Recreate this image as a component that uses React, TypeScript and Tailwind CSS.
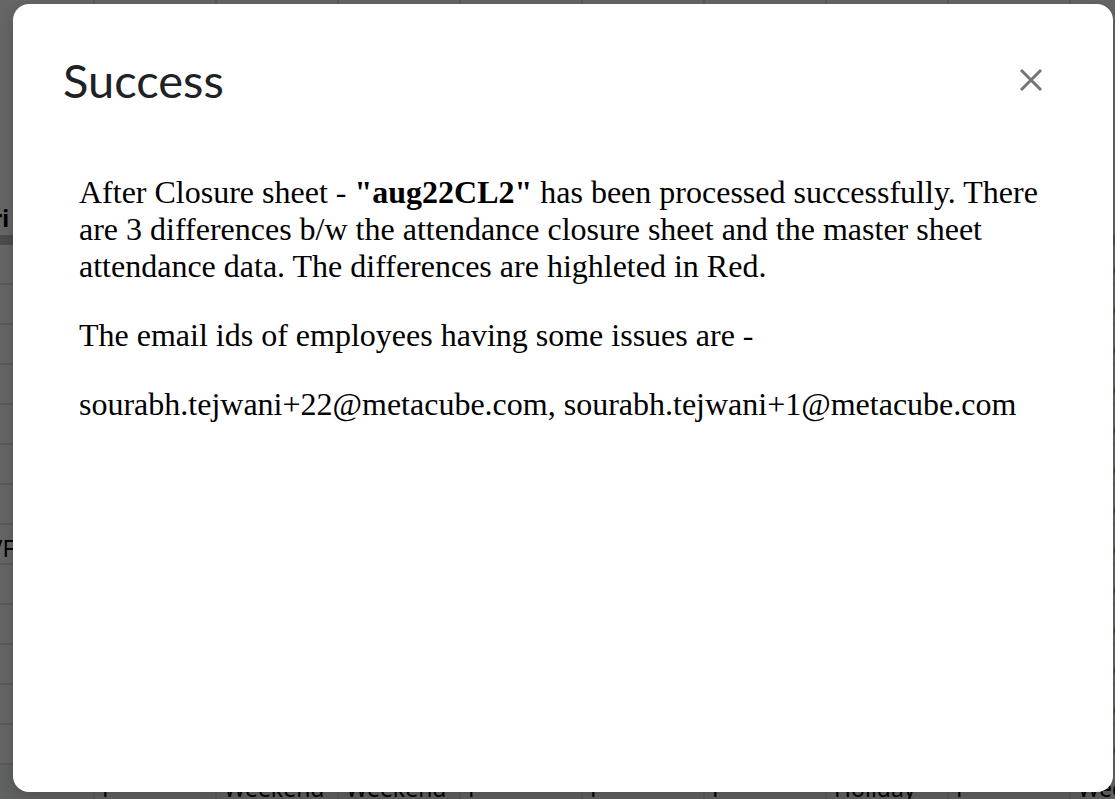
import { useState } from "react";

const rowNumbers = [1, 2, 3, 4, 5, 6, 7, 8, 9, 10, 11, 12, 13];
const lastRow = ["P", "Weekend", "Weekend", "P", "P", "P", "Holiday", "P", "Weekend"];
const cell = "border-r-2 border-b-2 border-[#e0e0e0] p-0 pt-2 whitespace-nowrap overflow-hidden";
const headCell = "border-r-2 border-b-10 border-r-[#e0e0e0] border-b-[#c0c0c0] p-0 pb-0.5 align-bottom font-bold";

function Sheet() {
  return (
    <div className="absolute inset-0 overflow-hidden bg-white" aria-hidden="true">
      <table className="w-[1193px] table-fixed border-separate border-spacing-0 text-left font-['Noto_Sans',sans-serif] text-[23px] leading-[30px] text-black">
        <colgroup>
          <col className="w-[95px]" />
          {lastRow.map((_, i) => (
            <col key={i} className="w-[122px]" />
          ))}
        </colgroup>
        <thead>
          <tr className="h-[245px]">
            <th className={headCell}>
              <span className="-ml-2 inline-block">ri</span>
            </th>
            {lastRow.map((_, i) => (
              <th key={i} className={headCell} />
            ))}
          </tr>
        </thead>
        <tbody>
          {rowNumbers.map((n) => (
            <tr key={n} className="h-10">
              <td className={cell}>{n === 8 && <span className="-ml-1.5 inline-block">/F</span>}</td>
              {lastRow.map((_, i) => (
                <td key={i} className={`${cell} pl-[42px] text-[#b45f06]`}>
                  {i === 8 ? "o" : ""}
                </td>
              ))}
            </tr>
          ))}
          <tr className="h-10 bg-[#f3f8f4]">
            <td className={cell} />
            {lastRow.map((text, i) => (
              <td key={i} className={`${cell} pl-[7px]`}>{text}</td>
            ))}
          </tr>
        </tbody>
      </table>
      <div className="absolute inset-0 bg-black/60" />
    </div>
  );
}

export default function App() {
  const [open, setOpen] = useState(true);
  return (
    <div className="relative flex h-screen overflow-hidden pt-1 pr-0.5 pb-[7px] pl-[13px]">
      <Sheet />
      {open && (
        <div
          role="dialog"
          aria-labelledby="dialog-title"
          className="relative flex-1 rounded-2xl bg-white shadow-[0_4px_16px_rgba(0,0,0,0.2)]"
        >
          <header className="flex items-center justify-between pt-12 pr-16 pl-[50px]">
            <h1 id="dialog-title" className="font-['Lato',sans-serif] text-[47px] leading-14 text-[#202124]">
              Success
            </h1>
            <button type="button" aria-label="Close" onClick={() => setOpen(false)} className="p-1">
              <svg viewBox="0 0 28 28" className="size-7" fill="none" stroke="#757575" strokeWidth="3">
                <path d="M4 4 24 24M24 4 4 24" />
              </svg>
            </button>
          </header>
          <div className="flex flex-col gap-8 pt-[66px] pr-[66px] pl-[66px] font-['Liberation_Serif',serif] text-[32px] leading-[37px] text-black">
            <p>
              After Closure sheet - <b>"aug22CL2"</b> has been processed successfully. There are 3 differences b/w the
              attendance closure sheet and the master sheet attendance data. The differences are highleted in Red.
            </p>
            <p>The email ids of employees having some issues are -</p>
            <p>sourabh.tejwani+22@metacube.com, sourabh.tejwani+1@metacube.com</p>
          </div>
        </div>
      )}
    </div>
  );
}
